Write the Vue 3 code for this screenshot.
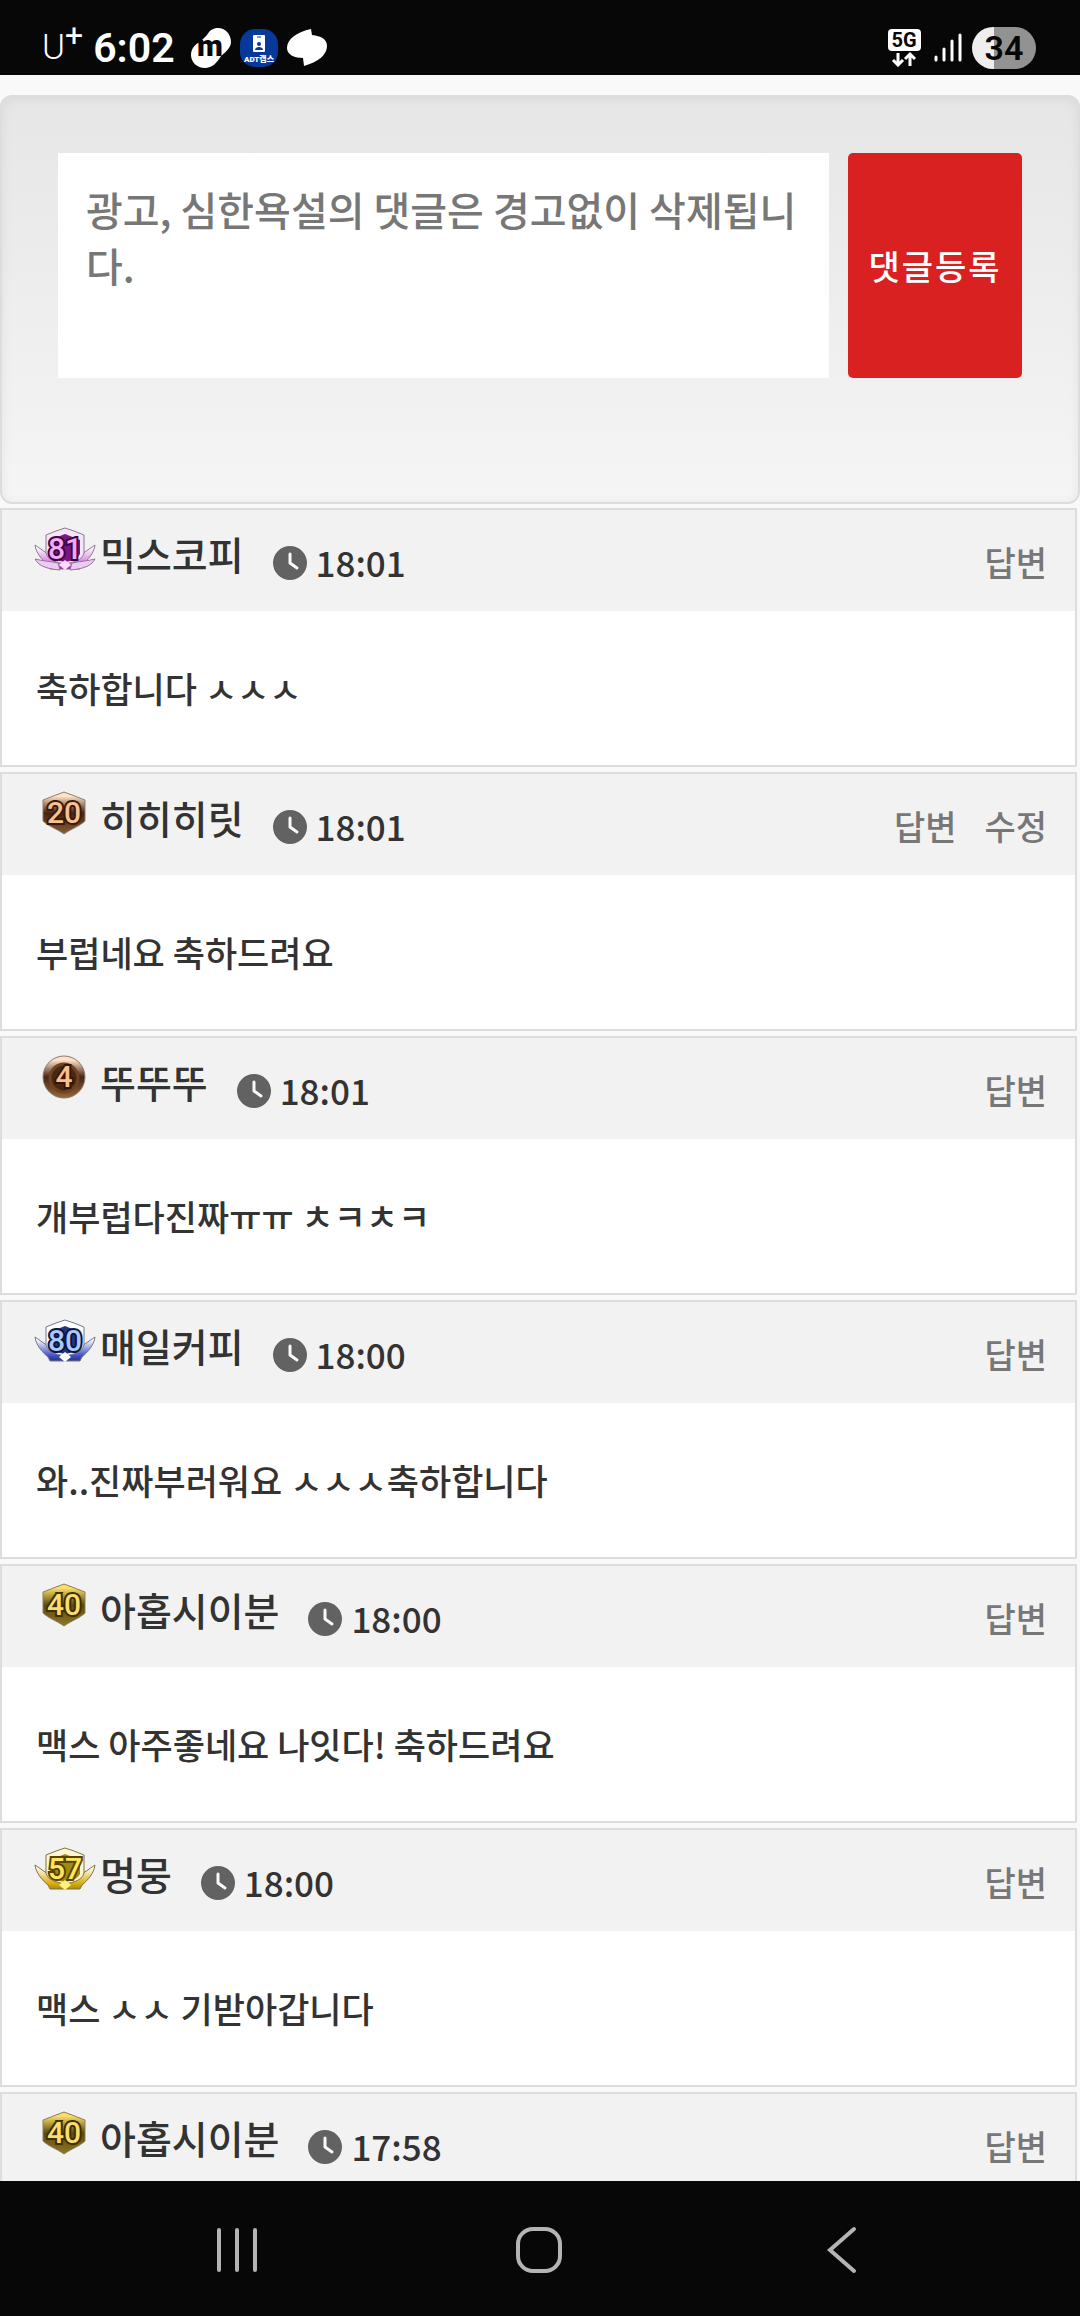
<script setup>

import { ref, reactive } from 'vue'

const newComment = ref('')

const comments = reactive([
    { id: 1, level: 81, badge: 'purple', name: '믹스코피', time: '18:01', text: '축하합니다 ㅅㅅㅅ', mine: false },
    { id: 2, level: 20, badge: 'bronze', name: '히히히릿', time: '18:01', text: '부럽네요 축하드려요', mine: true },
    { id: 3, level: 4, badge: 'copper', name: '뚜뚜뚜', time: '18:01', text: '개부럽다진짜ㅠㅠ ㅊㅋㅊㅋ', mine: false },
    { id: 4, level: 80, badge: 'blue', name: '매일커피', time: '18:00', text: '와..진짜부러워요 ㅅㅅㅅ축하합니다', mine: false },
    { id: 5, level: 40, badge: 'gold', name: '아홉시이분', time: '18:00', text: '맥스 아주좋네요 나잇다! 축하드려요', mine: false },
    { id: 6, level: 57, badge: 'yellow', name: '멍뭉', time: '18:00', text: '맥스 ㅅㅅ 기받아갑니다', mine: false },
    { id: 7, level: 40, badge: 'gold', name: '아홉시이분', time: '17:58', text: '', mine: false }
])

// shape + colours from top to bottom of each level badge
const badges = {
    purple: { shape: 'wings', top: '#f6e4f8', mid: '#7a1583', low: '#d86be0', rim: '#8d7a92', digit: '#f3a9f7', edge: '#3a0540', gem: '#ffd9ff' },
    blue: { shape: 'wings', top: '#ffffff', mid: '#27357e', low: '#3c4cc0', rim: '#73778c', digit: '#a9c9fb', edge: '#0b1440', gem: '#ffffff' },
    yellow: { shape: 'wings', top: '#fdf6d0', mid: '#a08a16', low: '#d9a808', rim: '#80733c', digit: '#ffe45c', edge: '#574300', gem: '#fff27a' },
    bronze: { shape: 'shield', top: '#ffe3c4', mid: '#4a2010', low: '#86603a', rim: '#8d7f70', digit: '#f5c391', edge: '#3a1a0a' },
    gold: { shape: 'shield', top: '#f8e064', mid: '#5e4a08', low: '#8f7526', rim: '#8a8060', digit: '#f9dc74', edge: '#3c2e00' },
    copper: { shape: 'circle', top: '#ffe0c8', mid: '#4a2412', low: '#94683c', rim: '#8a7a6c', digit: '#f7c08c', edge: '#341606' }
}

const addComment = () => {
    if (newComment.value.trim() === '') return
    const now = new Date()
    comments.unshift({
        id: Date.now(),
        level: 20,
        badge: 'bronze',
        name: '히히히릿',
        time: now.toTimeString().slice(0, 5),
        text: newComment.value,
        mine: true
    })
    newComment.value = ''
}

const replyTo = (comment) => {
    newComment.value = '@' + comment.name + ' '
}

const editComment = (comment) => {
    newComment.value = comment.text
}

</script>

<template>
    <div class="screen">
        <header class="status-bar">
            <div class="status-left">
                <span class="carrier">U<sup>+</sup></span>
                <span class="clock">6:02</span>
                <svg class="app-icon" viewBox="0 0 40 40" aria-hidden="true">
                    <path d="M9 14 L16 7 C19 2 22 0 27 0 C34 0 40 6 40 14 C40 19 36 23 30 28 C26 35 21 40 14 40 C6 40 0 34 0 27 C0 21 4 16 9 14Z" fill="#fff" />
                    <text x="19" y="28" text-anchor="middle" font-size="30" font-weight="900" fill="#070707">m</text>
                </svg>
                <svg class="app-icon" viewBox="0 0 40 40" aria-hidden="true">
                    <rect x="1" y="1" width="38" height="38" rx="15" fill="#06399a" />
                    <rect x="14" y="7" width="12" height="17" rx="1" fill="#fff" />
                    <path d="M18 9h4" stroke="#06399a" />
                    <circle cx="20" cy="16" r="2" fill="#06399a" />
                    <path d="M16 22c0-4 8-4 8 0z" fill="#06399a" />
                    <text x="20" y="34" text-anchor="middle" font-size="8" font-weight="900" fill="#fff">ADT캡스</text>
                </svg>
                <svg class="app-icon" viewBox="0 0 40 40" aria-hidden="true">
                    <path d="M24 1 C10 4 0 11 0 20 C0 27 8 30 16 30 L17 38 C31 34 40 27 40 18 C40 11 34 8 25 7Z" fill="#fff" />
                </svg>
            </div>
            <div class="status-right">
                <svg class="network" viewBox="0 0 34 38" aria-label="5G">
                    <rect width="33" height="22" rx="4" fill="#fff" />
                    <text x="16" y="18" text-anchor="middle" font-size="20" font-weight="700" fill="#070707">5G</text>
                    <path d="M10 24v12M5 31l5 5l5-5M22 37V25M17 30l5-5l5 5" fill="none" stroke="#fff" stroke-width="3" />
                </svg>
                <svg class="signal" viewBox="0 0 28 38" aria-hidden="true">
                    <path d="M2 28v3M10 20v11M18 12v19M26 6v25" stroke="#fff" stroke-width="3" stroke-linecap="round" />
                </svg>
                <span class="battery">34</span>
            </div>
        </header>

        <main class="content">
            <form class="write-box" @submit.prevent="addComment">
                <textarea v-model="newComment" aria-label="댓글 입력" placeholder="광고, 심한욕설의 댓글은 경고없이 삭제됩니다."></textarea>
                <button type="submit">댓글등록</button>
            </form>

            <article v-for="comment in comments" :key="comment.id" class="comment">
                <div class="comment-head">
                    <svg class="badge" viewBox="0 0 62 44" aria-hidden="true">
                        <defs>
                            <linearGradient :id="'fill-' + comment.id" x1="0" y1="0" x2="0" y2="1">
                                <stop offset="0.1" :stop-color="badges[comment.badge].top" />
                                <stop offset="0.5" :stop-color="badges[comment.badge].mid" />
                                <stop offset="1" :stop-color="badges[comment.badge].low" />
                            </linearGradient>
                            <linearGradient :id="'wing-' + comment.id" x1="0" y1="0" x2="0" y2="1">
                                <stop offset="0.1" stop-color="#fff" />
                                <stop offset="0.8" :stop-color="badges[comment.badge].low" />
                                <stop offset="1" :stop-color="badges[comment.badge].mid" />
                            </linearGradient>
                        </defs>
                        <g :stroke="badges[comment.badge].rim">
                            <template v-if="badges[comment.badge].shape === 'wings'">
                                <path d="M1 18 L14 27 L31 34 L48 27 L61 18 C60 26 54 33 48 38 L46 42 H16 L14 38 C8 33 2 26 1 18Z" :fill="'url(#wing-' + comment.id + ')'" />
                                <path v-if="comment.badge === 'purple'" d="M1 32 C8 34 15 34 24 36 L26 43 C15 42 5 40 1 32Z M61 32 C54 34 47 34 38 36 L36 43 C47 42 57 40 61 32Z" fill="#f0c8f4" />
                                <path d="M12 8 L22 4 L31 1 L40 4 L50 8 V26 C48 33 41 35 31 37 C21 35 14 33 12 26Z" :fill="badges[comment.badge].top" />
                                <path d="M16 13 L31 7 L46 13 V27 C43 32 38 34 31 35 C24 34 19 32 16 27Z" :fill="badges[comment.badge].mid" stroke="none" />
                            </template>
                            <path v-else-if="badges[comment.badge].shape === 'shield'" d="M30 1 L38 4 L51 9 V30 C46 35 37 38 30 43 C23 38 14 35 9 30 V9 L22 4Z" :fill="'url(#fill-' + comment.id + ')'" />
                            <template v-else>
                                <circle cx="30" cy="22" r="21" :fill="'url(#fill-' + comment.id + ')'" />
                                <circle cx="30" cy="23" r="14" fill="#4d2810" stroke="#6e4426" stroke-width="3" />
                            </template>
                        </g>
                        <text
                            :x="badges[comment.badge].shape === 'wings' ? 31 : 30"
                            y="32"
                            text-anchor="middle"
                            font-size="30"
                            font-weight="500"
                            paint-order="stroke"
                            stroke-width="4"
                            :stroke="badges[comment.badge].edge"
                            :fill="badges[comment.badge].digit"
                        >{{ comment.level }}</text>
                        <path v-if="badges[comment.badge].shape === 'wings'" d="M31 33 L37 38 L31 43 L25 38Z" :fill="badges[comment.badge].gem" />
                    </svg>
                    <strong class="name">{{ comment.name }}</strong>
                    <div class="meta">
                        <svg class="clock-icon" viewBox="0 0 34 34" aria-hidden="true">
                            <circle cx="17" cy="17" r="17" fill="#626262" />
                            <path d="M17 8v9l7 5" fill="none" stroke="#f9f9f9" stroke-width="3" stroke-linecap="round" stroke-linejoin="round" />
                        </svg>
                        <time>{{ comment.time }}</time>
                    </div>
                    <nav class="actions">
                        <a href="#" @click.prevent="replyTo(comment)">답변</a>
                        <a v-if="comment.mine" href="#" @click.prevent="editComment(comment)">수정</a>
                    </nav>
                </div>
                <p class="comment-text">{{ comment.text }}</p>
            </article>
        </main>

        <footer class="nav-bar">
            <button type="button" aria-label="최근 앱">
                <svg viewBox="0 0 48 48"><path d="M5 4v40M23 4v40M41 4v40" /></svg>
            </button>
            <button type="button" aria-label="홈">
                <svg viewBox="0 0 48 48"><rect x="2" y="3" width="42" height="42" rx="15" /></svg>
            </button>
            <button type="button" aria-label="뒤로">
                <svg viewBox="0 0 48 48"><path d="M36 3L12 24l24 21" /></svg>
            </button>
        </footer>
    </div>
</template>

<style>
body {
    background: #f9f9f9;
}
</style>

<style scoped>
.screen {
    display: flex;
    flex-direction: column;
    height: 100vh;
    font-family: "Noto Sans CJK KR", sans-serif;
    font-weight: 500;
    color: #333;
}

.status-bar {
    display: flex;
    flex-shrink: 0;
    justify-content: space-between;
    align-items: center;
    box-sizing: border-box;
    height: 75px;
    padding: 20px 44px 0 42px;
    background: #070707;
    color: #fff;
    font-family: Roboto, "Noto Sans CJK KR", sans-serif;
}

.status-left,
.status-right {
    display: flex;
    align-items: center;
    gap: 8px;
}

.carrier {
    margin-right: 2px;
    font-size: 35px;
    font-weight: 300;
    line-height: 40px;
}

.carrier sup {
    font-size: 32px;
    font-weight: 400;
    line-height: 0;
}

.clock {
    margin-right: 8px;
    font-size: 41px;
    font-weight: 600;
    line-height: 48px;
}

.app-icon {
    width: 40px;
    height: 40px;
}

.network {
    width: 34px;
    height: 38px;
}

.signal {
    width: 28px;
    height: 38px;
    margin: 0 2px 0 4px;
}

.battery {
    width: 64px;
    border-radius: 21px;
    background: linear-gradient(to right, #eee 34%, #929292 34%);
    color: #070707;
    font-size: 34px;
    font-weight: 600;
    line-height: 42px;
    text-align: center;
}

.content {
    flex: 1;
    min-height: 0;
    padding-top: 20px;
    overflow-y: auto;
    scrollbar-width: none;
}

.write-box {
    display: flex;
    align-items: flex-start;
    gap: 19px;
    margin-bottom: 4px;
    padding: 56px 56px 124px;
    border: 2px solid #ddd;
    border-radius: 12px;
    background: linear-gradient(#e6e6e6, #f5f5f5);
    box-shadow: inset 0 2px 12px rgba(0, 0, 0, 0.06);
}

.write-box textarea {
    flex: 1;
    box-sizing: border-box;
    min-width: 0;
    height: 225px;
    padding: 28px;
    border: 0;
    background: #fff;
    color: #333;
    font-family: inherit;
    font-size: 40px;
    font-weight: 500;
    line-height: 56px;
    word-break: break-all;
    resize: none;
}

.write-box textarea::placeholder {
    color: #777;
}

.write-box button {
    width: 174px;
    height: 225px;
    padding: 0;
    border: 0;
    border-radius: 5px;
    background: #da2121;
    color: #fff;
    font-family: inherit;
    font-size: 34px;
    font-weight: 500;
    letter-spacing: 2px;
    cursor: pointer;
}

.comment {
    margin: 0 3px 5px 0;
    border: 2px solid #ddd;
    background: #fff;
}

.comment-head {
    display: flex;
    align-items: flex-start;
    padding: 17px 28px 28px 32px;
    background: #f2f2f2;
    line-height: 56px;
}

.badge {
    width: 62px;
    height: 44px;
    margin-right: 4px;
    font-family: Roboto, sans-serif;
}

.name {
    margin-right: 29px;
    font-size: 39px;
    font-weight: 500;
    line-height: 52px;
}

.meta {
    display: flex;
    align-items: center;
    gap: 9px;
    height: 42px;
    padding-top: 14px;
    font-size: 35px;
}

.clock-icon {
    width: 34px;
    height: 34px;
    margin-top: 2px;
}

.actions {
    display: flex;
    gap: 28px;
    height: 42px;
    margin-left: auto;
    padding-top: 14px;
    line-height: 42px;
}

.actions a {
    color: #777;
    font-size: 34px;
    text-decoration: none;
}

.comment-text {
    min-height: 56px;
    margin: 0;
    padding: 49px 34px;
    font-size: 35px;
    line-height: 56px;
}

.nav-bar {
    display: grid;
    grid-template-columns: repeat(3, 1fr);
    flex-shrink: 0;
    box-sizing: border-box;
    height: 135px;
    padding: 6px 8% 0;
    background: #070707;
}

.nav-bar button {
    border: 0;
    background: none;
    cursor: pointer;
}

.nav-bar svg {
    width: 48px;
    height: 48px;
    fill: none;
    stroke: #b4b4b4;
    stroke-width: 4;
    stroke-linecap: round;
}
</style>
